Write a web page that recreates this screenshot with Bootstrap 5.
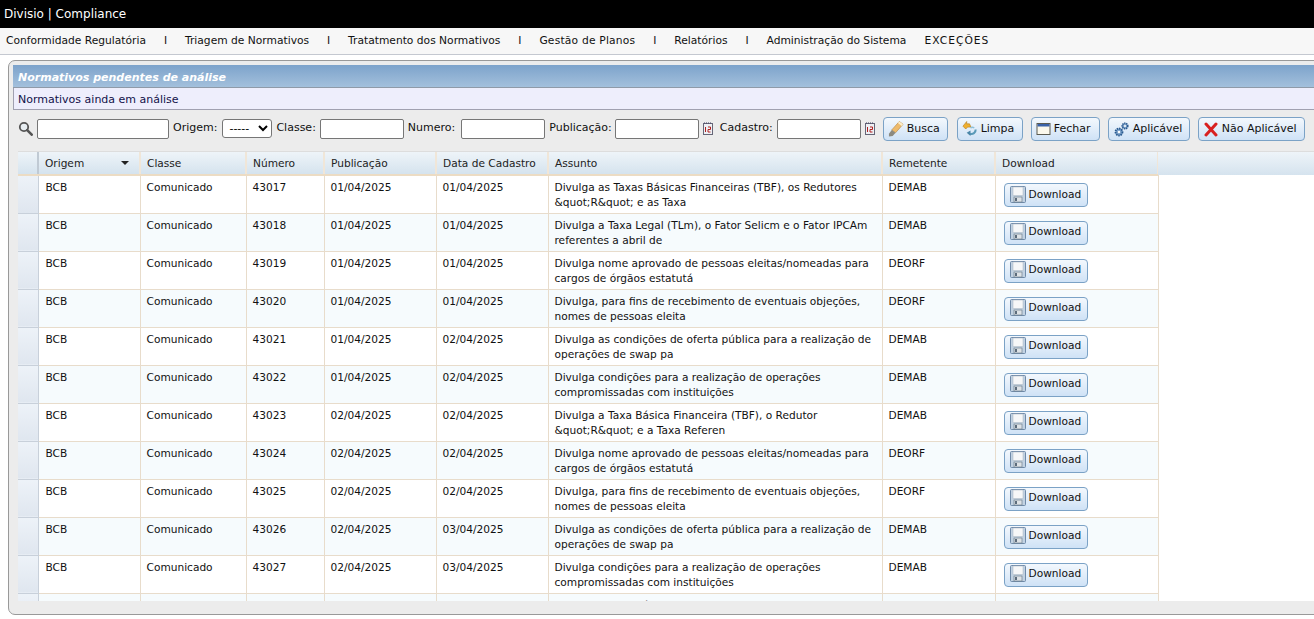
<!DOCTYPE html>
<html lang="pt-BR">
<head>
  <meta charset="UTF-8">
  <meta name="viewport" content="width=device-width, initial-scale=1.0">
  <title>Divisio | Compliance</title>
  <link href="https://cdn.jsdelivr.net/npm/bootstrap@5.3.3/dist/css/bootstrap.min.css" rel="stylesheet">
  <style>
    html, body { height: 100%; overflow: hidden; }
    body { background: #fff; font-family: "DejaVu Sans", sans-serif; font-size: 11px; color: #111; }
    .app-top { height: 28px; background: #000; color: #fff; font-size: 12px; line-height: 28px; padding-left: 4px; }
    .app-menu { height: 27px; background: #f7f7f7; border-bottom: 1px solid #c4c8d0; font-size: 10.7px; padding-left: 6px; line-height: 26px; white-space: nowrap; }
    .app-menu a { color: #111; text-decoration: none; }
    .app-menu .sep { width: 39px; text-align: center; }
    .app-menu .gap-last { width: 18px; }
    .app-menu .mn-wide { letter-spacing: .2px; }
    .app-menu .mn-caps { letter-spacing: 1px; }
    .panel-outer { width: 1340px; height: 555px; margin: 5px 0 0 8px; background: #ececec; border: 1px solid #999; border-radius: 7px; padding: 4px; }
    .panel-title { height: 23px; background: linear-gradient(#7da3cb, #a3c0dc); border-bottom: 1px solid #8f9aa8; color: #fff; font-weight: bold; font-style: italic; line-height: 25px; padding-left: 5px; }
    .panel-sub { height: 22px; background: #eeeefc; border: 1px solid #a0a0b0; border-top: 0; border-right: 0; color: #12124a; line-height: 23px; padding-left: 4px; }
    .tool-row { height: 41px; padding: 0 0 4px 5px; }
    .tool-row .tool-btn { margin-top: 1px; }
    .tool-input { height: 20px; border: 1px solid #767676; border-radius: 2px; background: #fff; padding: 0 3px; font-size: 11px; }
    .w-132 { width: 132px; }
    .w-84 { width: 84px; }
    .tool-select { width: 50px; height: 19px; border: 1px solid #767676; border-radius: 3px; background: #fff; font-size: 11px; padding: 0 0 0 2px; }
    .tool-btn { height: 24px; border: 1px solid #7ba2c6; border-radius: 4px; background: linear-gradient(#f3f8fd, #cfe2f6); color: #111; font-size: 11px; padding: 0 4px; display: inline-flex; align-items: center; gap: 3px; white-space: nowrap; }
    .btn-busca { width: 65px; margin-left: 8px; }
    .btn-limpa { width: 66px; margin-left: 9px; }
    .btn-fechar { width: 69px; margin-left: 8px; }
    .btn-aplic { width: 82px; margin-left: 8px; }
    .btn-nao { width: 107px; margin-left: 8px; }
    .lbl-select { margin: 0 5px 0 4px; }
    .lbl-numero { margin: 0 6px 0 4px; }
    .lbl-pub { margin: 0 3px 0 4px; }
    .lbl-cadastro { margin: 0 4px 0 7px; }
    .grid-wrap { width: 1296px; height: 450px; margin-left: 5px; overflow: hidden; background: #fff; border-top: 1px solid #ddd; position: relative; }
    .head-fill { position: absolute; left: 1140px; right: 0; top: 0; height: 23px; background: linear-gradient(#eef4f9, #d5e3ee); }
    .grid-table { table-layout: fixed; width: 1140px; border-collapse: collapse; background: #fff; font-size: 10.6px; }
    .grid-table th { font-weight: normal; padding: 1px 6px 0; height: 23px; color: #222; background: linear-gradient(#eef4f9, #d5e3ee); border-right: 2px solid #f0e6d8; border-bottom: 2px solid #ecdcc4; }
    .grid-table td { height: 38px; padding: 4px 6px 0; vertical-align: top; border-right: 1px solid #e8dccb; border-bottom: 1px solid #e8dccb; line-height: 15px; white-space: nowrap; overflow: hidden; }
    .grid-table td:nth-child(2) { padding-left: 7px; }
    .grid-table tr.alt td { background: #f6fbfd; }
    .grid-table td.row-hand, .grid-table tr.alt td.row-hand { background: linear-gradient(#edf2f8, #dfe6ef); border-right: 1px solid #c8d0da; border-bottom: 1px solid #c8d0da; padding: 0; }
    .grid-table th.row-hand { border-right: 2px solid #c0cad4; padding: 0; }
    .sort-mark { width: 0; height: 0; border-left: 4px solid transparent; border-right: 4px solid transparent; border-top: 4px solid #222; }
    .dl-btn { width: 84px; margin: 3px 0 0 2px; font-size: 10.6px; padding: 0 0 2px 5px; justify-content: flex-start; }
  </style>
</head>
<body>
  <div class="app-top">Divisio | Compliance</div>
  <div class="app-menu d-flex">
    <a href="#">Conformidade Regulatória</a><span class="sep">I</span>
    <a href="#">Triagem de Normativos</a><span class="sep">I</span>
    <a href="#">Tratatmento dos Normativos</a><span class="sep">I</span>
    <a href="#" class="mn-wide">Gestão de Planos</a><span class="sep">I</span>
    <a href="#">Relatórios</a><span class="sep">I</span>
    <a href="#">Administração do Sistema</a><span class="gap-last"></span>
    <a href="#" class="mn-caps">EXCEÇÕES</a>
  </div>

  <div class="panel-outer">
    <div class="panel-title">Normativos pendentes de análise</div>
    <div class="panel-sub">Normativos ainda em análise</div>

    <div class="tool-row d-flex align-items-center">
      <svg width="15" height="15" viewBox="0 0 15 15" class="me-1"><circle cx="6" cy="6" r="4.2" fill="#e8eef2" stroke="#555" stroke-width="1.8"/><path d="M9.2 9.2l4.5 4.5" stroke="#555" stroke-width="2.6" stroke-linecap="round"/></svg>
      <input class="tool-input w-132" type="text">
      <label class="lbl-select">Origem:</label>
      <select class="tool-select"><option>-----</option></select>
      <label class="mx-1">Classe:</label>
      <input class="tool-input w-84" type="text">
      <label class="lbl-numero">Numero:</label>
      <input class="tool-input w-84" type="text">
      <label class="lbl-pub">Publicação:</label>
      <input class="tool-input w-84" type="text">
      <svg class="ms-1" width="10" height="13" viewBox="0 0 10 13"><rect x=".5" y="1.5" width="9" height="11" fill="#eef0f4" stroke="#667"/><path d="M1 1h8" stroke="#446" stroke-dasharray="1 1"/><path d="M2.500 5v5M5 5h2.500v2.500H5V10h2.500" fill="none" stroke="#b02020"/></svg>
      <label class="lbl-cadastro">Cadastro:</label>
      <input class="tool-input w-84" type="text">
      <svg class="ms-1" width="10" height="13" viewBox="0 0 10 13"><rect x=".5" y="1.5" width="9" height="11" fill="#eef0f4" stroke="#667"/><path d="M1 1h8" stroke="#446" stroke-dasharray="1 1"/><path d="M2.500 5v5M5 5h2.500v2.500H5V10h2.500" fill="none" stroke="#b02020"/></svg>
      <button class="tool-btn btn-busca">
        <svg width="16" height="18" viewBox="0 0 17 18"><path d="M12 1l4 3-8 9-4-3z" fill="#eebb6c" stroke="#b88844" stroke-width=".7"/><path d="M12 1l4 3-1.500 1.700-4-3z" fill="#fbeecb"/><path d="M4 10l4 3-3 3.500-4 .5 0-3z" fill="#8c8a80"/></svg>Busca</button>
      <button class="tool-btn btn-limpa">
        <svg width="16" height="18" viewBox="0 0 17 18"><path d="M1 6l4-5v2.500h3l1.500 3.500H6L4 9z" fill="#f0b030" stroke="#b07818" stroke-width=".6"/><path d="M14.500 9.500a4.500 4.500 0 0 1-6 4.500" fill="none" stroke="#5a9ab8" stroke-width="2.200"/><path d="M5 13l4-2.500v6z" fill="#4a86a8"/><path d="M9 8a3 3 0 0 1 4 0" fill="none" stroke="#8fc0d8" stroke-width="1.600"/></svg>Limpa</button>
      <button class="tool-btn btn-fechar">
        <svg width="15" height="12" viewBox="0 0 14 12"><rect x=".5" y=".5" width="13" height="11" fill="#fbf8ec" stroke="#5a5a50"/><rect x="1" y="1" width="12" height="2.500" fill="#3a62a8"/></svg>Fechar</button>
      <button class="tool-btn btn-aplic">
        <svg width="17" height="17" viewBox="0 0 17 17"><circle cx="6" cy="11" r="3.500" fill="#7aa0c8" stroke="#2a5a90" stroke-width="1.800" stroke-dasharray="1.500 .8"/><circle cx="6" cy="11" r="1.200" fill="#fff"/><circle cx="12" cy="5" r="2.800" fill="#7aa0c8" stroke="#2a5a90" stroke-width="1.600" stroke-dasharray="1.300 .7"/><circle cx="12" cy="5" r="1" fill="#fff"/></svg>Aplicável</button>
      <button class="tool-btn btn-nao">
        <svg width="16" height="15" viewBox="0 0 15 15"><path d="M2.500 2l10 11M12.500 2l-10 11" stroke="#d82020" stroke-width="3" stroke-linecap="round"/></svg>Não Aplicável</button>
    </div>

    <div class="grid-wrap">
      <div class="head-fill"></div>
      <table class="grid-table">
        <colgroup>
          <col style="width:20px"><col style="width:102px"><col style="width:106px"><col style="width:78px"><col style="width:112px"><col style="width:112px"><col style="width:334px"><col style="width:113px"><col style="width:163px">
        </colgroup>
        <thead>
          <tr>
            <th class="row-hand"></th>
            <th><div class="d-flex align-items-center justify-content-between pe-1">Origem<span class="sort-mark"></span></div></th>
            <th>Classe</th><th>Número</th><th>Publicação</th><th>Data de Cadastro</th><th>Assunto</th><th>Remetente</th><th>Download</th>
          </tr>
        </thead>
        <tbody id="grid-body"></tbody>
      </table>
    </div>
  </div>

  <script>
    // linhas do grid: numero, publicacao, cadastro, assunto, remetente
    const rows = [
      ['43017', '01/04/2025', '01/04/2025', 'Divulga as Taxas Básicas Financeiras (TBF), os Redutores<br>&amp;quot;R&amp;quot; e as Taxa', 'DEMAB'],
      ['43018', '01/04/2025', '01/04/2025', 'Divulga a Taxa Legal (TLm), o Fator Selicm e o Fator IPCAm<br>referentes a abril de', 'DEMAB'],
      ['43019', '01/04/2025', '01/04/2025', 'Divulga nome aprovado de pessoas eleitas/nomeadas para<br>cargos de órgãos estatutá', 'DEORF'],
      ['43020', '01/04/2025', '01/04/2025', 'Divulga, para fins de recebimento de eventuais objeções,<br>nomes de pessoas eleita', 'DEORF'],
      ['43021', '01/04/2025', '02/04/2025', 'Divulga as condições de oferta pública para a realização de<br>operações de swap pa', 'DEMAB'],
      ['43022', '01/04/2025', '02/04/2025', 'Divulga condições para a realização de operações<br>compromissadas com instituições', 'DEMAB'],
      ['43023', '02/04/2025', '02/04/2025', 'Divulga a Taxa Básica Financeira (TBF), o Redutor<br>&amp;quot;R&amp;quot; e a Taxa Referen', 'DEMAB'],
      ['43024', '02/04/2025', '02/04/2025', 'Divulga nome aprovado de pessoas eleitas/nomeadas para<br>cargos de órgãos estatutá', 'DEORF'],
      ['43025', '02/04/2025', '02/04/2025', 'Divulga, para fins de recebimento de eventuais objeções,<br>nomes de pessoas eleita', 'DEORF'],
      ['43026', '02/04/2025', '03/04/2025', 'Divulga as condições de oferta pública para a realização de<br>operações de swap pa', 'DEMAB'],
      ['43027', '02/04/2025', '03/04/2025', 'Divulga condições para a realização de operações<br>compromissadas com instituições', 'DEMAB'],
      ['43028', '03/04/2025', '03/04/2025', 'Divulga a Taxa Básica Financeira (TBF), o Redutor<br>&amp;quot;R&amp;quot; e a Taxa Referen', 'DEMAB']
    ];
    const floppy = '<svg width="16" height="17" viewBox="0 0 16 17"><rect x=".5" y=".5" width="15" height="16" rx="1" fill="#c2d2e2" stroke="#6f8aa8"/><rect x="3" y="1" width="10" height="8.500" fill="#f6f7f8" stroke="#a8b4c0" stroke-width=".5"/><rect x="4" y="11" width="8" height="5" fill="#dde2e6" stroke="#70808f" stroke-width=".7"/><rect x="5" y="12" width="2" height="3" fill="#5c6c7c"/></svg>';
    document.getElementById('grid-body').innerHTML = rows.map((r, i) => `
      <tr class="${i % 2 ? 'alt' : ''}">
        <td class="row-hand"></td><td>BCB</td><td>Comunicado</td><td>${r[0]}</td><td>${r[1]}</td><td>${r[2]}</td>
        <td>${r[3]}</td><td>${r[4]}</td>
        <td><button class="tool-btn dl-btn">${floppy}Download</button></td>
      </tr>`).join('');
  </script>
  <script src="https://cdn.jsdelivr.net/npm/bootstrap@5.3.3/dist/js/bootstrap.bundle.min.js"></script>
</body>
</html>
